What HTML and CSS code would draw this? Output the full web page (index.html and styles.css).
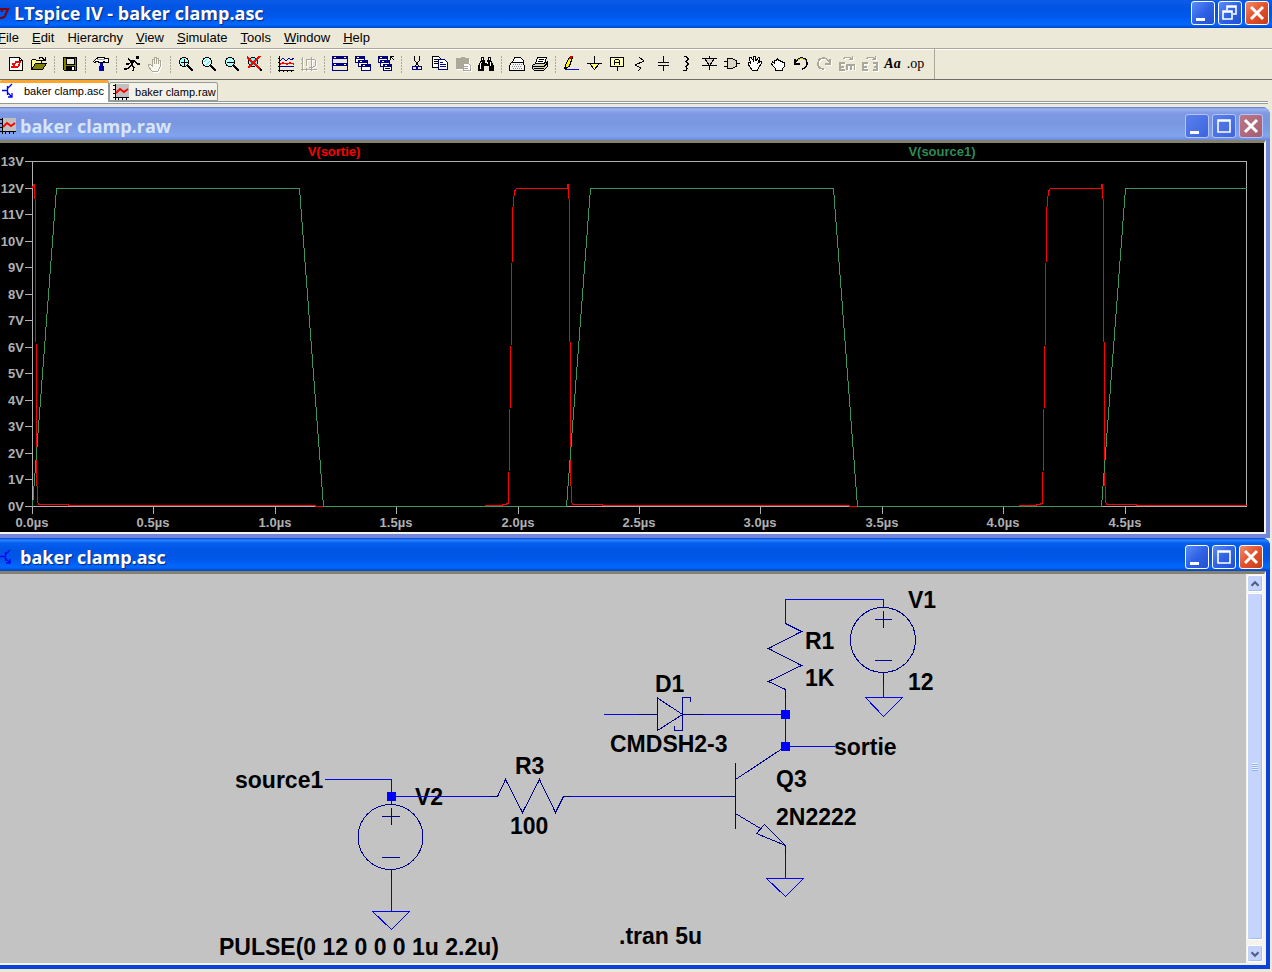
FILE: index.html
```html
<!DOCTYPE html>
<html lang="en">

<head>
    <meta charset="UTF-8" />
    <meta name="viewport" content="width=device-width, initial-scale=1.0" />
    <title>LTspice IV - baker clamp.asc</title>
    <link rel="stylesheet" href="styles.css">
</head>

<body>
    <header class="titlebar">
        <svg class="app-logo" viewBox="0 0 10 16"><path d="M0 4h8l-3 7q-1 2-5 2M0 4q2 0 2 3" fill="none" stroke="#7a0010" stroke-width="2" /></svg>
        <h1>LTspice IV - baker clamp.asc</h1>
        <div class="win-buttons">
            <button aria-label="Minimize"><svg viewBox="0 0 22 22"><path d="M4 16h9v3H4z" fill="#fff" /></svg></button>
            <button aria-label="Restore"><svg viewBox="0 0 22 22"><path d="M8 8V4h9v8h-3M8 5h9M4 9h9v8H4zM4 10h9" fill="none" stroke="#fff" stroke-width="1.6" /></svg></button>
            <button class="close" aria-label="Close"><svg viewBox="0 0 22 22"><path d="M5 5l12 12M17 5L5 17" stroke="#fff" stroke-width="3" /></svg></button>
        </div>
    </header>

    <nav class="menubar">
        <button><u>F</u>ile</button>
        <button><u>E</u>dit</button>
        <button>H<u>i</u>erarchy</button>
        <button><u>V</u>iew</button>
        <button><u>S</u>imulate</button>
        <button><u>T</u>ools</button>
        <button><u>W</u>indow</button>
        <button><u>H</u>elp</button>
    </nav>

    <div class="toolbar">
        <!-- file -->
        <button aria-label="New schematic"><svg viewBox="0 0 16 16"><path d="M1.5 1.5h10l3 3v10h-13z" fill="#fff" stroke="#000" /><path d="M11.5 1.5v3h3" fill="none" stroke="#000" /><path d="M3 11h2l3-5h5M6 11h3q2 0 3-5M4 8h2" fill="none" stroke="#f00" stroke-width="1.6" /></svg></button>
        <button aria-label="Open"><svg viewBox="0 0 16 16"><path d="M.5 13.5v-9l1-1h3l1 1h5v3" fill="#ffff90" stroke="#000" /><path d="M.5 13.5l4-6h11l-4 6z" fill="#808000" stroke="#000" /><path d="M8 2.500l1-1h2l3 3M14.5 1v4M11 4.5h4" fill="none" stroke="#000" /></svg></button>
        <span class="sep"></span>
        <button aria-label="Save"><svg viewBox="0 0 16 16"><path d="M1.5 1.5h13v13h-12l-1-1z" fill="#808000" stroke="#000" /><path d="M4 2h8v6H4z" fill="#ece9d8" stroke="#000" /><path d="M4 10h9v4H4z" fill="#000" /><path d="M10 11h2v3h-2z" fill="#fff" /></svg></button>
        <span class="sep"></span>
        <button aria-label="Control panel"><svg viewBox="0 0 16 16"><path d="M.5 5.5l3-3 2-1h5l2 1h3v4h-3l-2-1v1h-5v-1h-2l-2 1z" fill="#fff" stroke="#000" /><path d="M4 3.5h8" stroke="#a0a0a0" /><path d="M7 7h3v3h1v5H6v-5h1z" fill="#0000e0" /><path d="M9.5 7v8" stroke="#000080" /></svg></button>
        <span class="sep"></span>
        <button aria-label="Run"><svg viewBox="0 0 16 16"><path d="M12 0h3v3h-3z" fill="#000" /><path d="M11 4L7 9l3 2-1 4M7 9l-2 3-3 1H0M4 2l2 3h5l2 3h3M9 4L5 8H2M7 6l2 3" fill="none" stroke="#000" stroke-width="1.3" /></svg></button>
        <button aria-label="Halt" disabled><svg viewBox="0 0 16 16"><path d="M5 15l-4-5v-2h2l2 2V3h2V1h2v1h2v2h2v7l-2 4zM7 3v5M9 2v6M11 4v4" fill="#f8f7f0" stroke="#aca899" /></svg></button>
        <span class="sep"></span>
        <!-- zoom -->
        <button aria-label="Zoom in"><svg viewBox="0 0 16 16"><circle cx="6" cy="6" r="4.5" fill="#b0ffff" stroke="#000" /><path d="M10 10l5 5" stroke="#000" stroke-width="2" /><path d="M6.5 3v7M3 6.500h7" stroke="#000" /></svg></button>
        <button aria-label="Pan"><svg viewBox="0 0 16 16"><circle cx="6" cy="6" r="4.5" fill="#d9ffff" stroke="#000" /><path d="M3 6l3-3M5 9l4-4" stroke="#3ee" /><path d="M10 10l5 5" stroke="#000" stroke-width="2" /></svg></button>
        <button aria-label="Zoom out"><svg viewBox="0 0 16 16"><circle cx="6" cy="6" r="4.5" fill="#b0ffff" stroke="#000" /><path d="M10 10l5 5" stroke="#000" stroke-width="2" /><path d="M3 6.5h7" stroke="#000" /></svg></button>
        <button aria-label="Zoom to fit"><svg viewBox="0 0 16 16"><circle cx="6" cy="6" r="4.5" fill="#6ff" stroke="#000" /><path d="M10 10l5 5" stroke="#000" stroke-width="2" /><path d="M0 1l13 12M13 0L1 12" stroke="#f00" stroke-width="2" /></svg></button>
        <span class="sep"></span>
        <button aria-label="Autorange"><svg viewBox="0 0 16 16"><path d="M1.5 0v16M0 14.5h16M0 2.5h2M0 6.5h2M0 10.5h2M5.5 14v2M9.5 14v2M13.5 14v2" stroke="#000" /><path d="M2 5l3-3 3 3 3-3 2 2 3-2M2 11l3-1 4 1 3-1 4 1" fill="none" stroke="#0000a0" /><path d="M2 8l3-1 4 1 3-1 4 1" fill="none" stroke="#f00" stroke-width="1.5" /></svg></button>
        <button aria-label="Pick visible traces" disabled><svg viewBox="0 0 16 16"><path d="M1.5 1v14M0 13.5h16M0 3.5h2M0 7.5h2M5.5 12v3M10.5 12v3M6 3h6q3 0 3 4t-3 4H8M6 3q-2 3 0 7M10 1v12" fill="none" stroke="#aca899" /></svg></button>
        <span class="sep"></span>
        <!-- windows -->
        <button aria-label="Tile windows"><svg viewBox="0 0 16 16"><path d="M.5.5h15v14H.5z" fill="#ece9d8" stroke="#000080" /><path d="M0 0h16v3H0zM0 7h16v3H0z" fill="#000080" /><path d="M2 1.5h2M12 1.5h2M2 8.5h2M12 8.5h2" stroke="#fff" /></svg></button>
        <button aria-label="Cascade windows"><svg viewBox="0 0 16 16"><g fill="#fff" stroke="#000080"><path d="M.5.5h9v6h-9z" /><path d="M3.5 4.5h9v6h-9z" /><path d="M6.5 8.500h9v6h-9z" /></g><path d="M0 0h10v3H0zM3 4h10v3H3zM6 8h10v3H6z" fill="#000080" /><path d="M2 1.5h2M5 5.5h2M8 9.5h2" stroke="#fff" /></svg></button>
        <button aria-label="Close all windows"><svg viewBox="0 0 16 16"><g fill="#fff" stroke="#000080"><path d="M.5.5h9v6h-9z" /><path d="M2.5 4.5h9v6h-9z" /><path d="M5.5 8.5h8v6h-8z" /></g><path d="M0 0h10v3H0zM2 4h10v3H2zM5 8h9v3H5z" fill="#000080" /><path d="M2 1.5h2M4 5.5h2M7 9.5h2" stroke="#fff" /><path d="M7 12.5h5" stroke="#000" /><path d="M12.5 4V.5H16M12.5.5l4 4" stroke="#000" fill="none" /></svg></button>
        <span class="sep"></span>
        <!-- clipboard -->
        <button aria-label="Cut"><svg viewBox="0 0 16 16"><path d="M5.5 0v4l4 6M10.5 0v4l-4 6" fill="none" stroke="#000" /><circle cx="5.5" cy="12" r="2" fill="none" stroke="#000080" /><circle cx="10.500" cy="12" r="2" fill="none" stroke="#000080" /></svg></button>
        <button aria-label="Copy"><svg viewBox="0 0 16 16"><path d="M.5.5h6l3 3v8h-9z" fill="#fff" stroke="#000" /><path d="M2 3.5h4M2 5.5h5M2 7.5h4" stroke="#000" /><path d="M6.5 3.5h6l3 3v7h-9z" fill="#fff" stroke="#000080" /><path d="M8 6.5h3M8 8.5h6M8 10.5h6" stroke="#000080" /></svg></button>
        <button aria-label="Paste" disabled><svg viewBox="0 0 16 16"><path d="M1 2h4l1-1h3l1 1h4v5H9v6H1z" fill="#aca899" /><path d="M8.5 7.5h5l2 2v5h-7z" fill="#fff" stroke="#aca899" /><path d="M9 10.5h4M9 12.5h4" stroke="#aca899" /></svg></button>
        <button aria-label="Find"><svg viewBox="0 0 16 16"><path d="M3 1h3v3h1v3h2V4h1V1h3v3l3 6v5h-5v-5H6v5H0v-5l3-6z" fill="#000" /><path d="M4.5 2v2M11.5 2v2M3.5 6L2 10v3M9.5 6v2M12.5 6v4" stroke="#fff" fill="none" /></svg></button>
        <span class="sep"></span>
        <button aria-label="Print preview"><svg viewBox="0 0 16 16"><path d="M3.5 6.5l2-5h6l3 3v2" fill="#fff" stroke="#000" /><path d="M2.5 6.5h11l2 3v5H.5v-5z" fill="#f4f4f4" stroke="#000" /><path d="M4 8.5h10M3 10.5h10M4 12.5h9" stroke="#888" stroke-dasharray="1 1" /></svg></button>
        <button aria-label="Print"><svg viewBox="0 0 16 16"><path d="M3.5 7.5l2-6h9l-2 6z" fill="#fff" stroke="#000" /><path d="M7 3.5h5M6 5.5h5" stroke="#000" /><path d="M.5 9.5l3-2h9l3-2v5l-4 4h-9l-2-2z" fill="#d8d5c5" stroke="#000" /><path d="M1 10.5h11l3-3M2 12.5h10" stroke="#000" fill="none" /><path d="M9 11.5h2" stroke="#dd0" /></svg></button>
        <span class="sep"></span>
        <!-- schematic parts -->
        <button aria-label="Wire"><svg viewBox="0 0 16 16"><path d="M2.5 9l4-8h3l-3 9-4 3z" fill="#ff0" stroke="#000" /><path d="M7 0h3L9 3H6z" fill="#d00000" /><path d="M1 13l1-3 2 2z" fill="#000" /><path d="M2 13.5h14" stroke="#00f" /></svg></button>
        <button aria-label="Ground"><svg viewBox="0 0 16 16"><path d="M8.5 0v7M1 7.5h15" stroke="#000" /><path d="M3.500 7.5h10l-5 6z" fill="#ffff80" stroke="#000" /></svg></button>
        <button aria-label="Label net"><svg viewBox="0 0 16 16"><path d="M1.5 1.5h13v9h-13z" fill="#ffffb0" stroke="#000" /><path d="M5.500 9V5l1-1.500h3l1 1.500v4M6 6.500h4M8.500 11v4" fill="none" stroke="#000" /></svg></button>
        <button aria-label="Resistor"><svg viewBox="0 0 16 16"><path d="M7 1l5 4-9 4 6 3-3 3" fill="none" stroke="#000" /></svg></button>
        <button aria-label="Capacitor"><svg viewBox="0 0 16 16"><path d="M8.500 0v6M8.500 10v5M3 6.5h11M3 9.5h11" stroke="#000" /></svg></button>
        <button aria-label="Inductor"><svg viewBox="0 0 16 16"><path d="M6 .5h2l2 2v1l-2 2H7h1l2 2v1l-2 2H7h1l1 2-1 2H5" fill="none" stroke="#000" /></svg></button>
        <button aria-label="Diode"><svg viewBox="0 0 16 16"><path d="M3.5 2.5h10l-5 7z" fill="#d8d5c5" stroke="#000" /><path d="M8.5 0v2M8.5 10v4M1 2.5h15M1 9.5h15" stroke="#000" /></svg></button>
        <button aria-label="Component"><svg viewBox="0 0 16 16"><path d="M3.5 2.5H8l4 2 1 3-1 3-4 2H3.500z" fill="#d8d5c5" stroke="#000" /><path d="M0 5.500h3M0 10.500h3M13 7.500h3" stroke="#000" /></svg></button>
        <button aria-label="Move"><svg viewBox="0 0 16 16"><path d="M5 14L1 8V6h2l1 2-2-6 2-1 3 5-1-6h2l1 5 3-4 1 1-2 5 3-2 1 1-5 9z" fill="#fff" stroke="#000" /></svg></button>
        <button aria-label="Drag"><svg viewBox="0 0 16 16"><path d="M5 14v-2L1.500 8l1-2 2 1V4h2l1-1 1 1h2v1h2v1h2v4l-2 3v1z" fill="#fff" stroke="#000" /></svg></button>
        <button aria-label="Undo"><svg viewBox="0 0 16 16"><path d="M2 3v5h5M2 8q2-6 7-6t5 6q0 4-5 5" fill="none" stroke="#000" stroke-width="1.5" /><path d="M5 4q5-3 8 1" fill="none" stroke="#cc0" /></svg></button>
        <button aria-label="Redo" disabled><svg viewBox="0 0 16 16"><path d="M14 3v5H9M14 8q-2-6-7-6T2 8q0 5 6 5" fill="none" stroke="#aca899" stroke-width="1.5" /></svg></button>
        <button aria-label="Rotate" disabled><svg viewBox="0 0 16 16"><path d="M4 3q4-4 9 0V0M13 3h-3" fill="none" stroke="#aca899" /><path d="M6 7H1v7h5M1 10.500h4M8 14V9h8v5M12 9v5" fill="none" stroke="#aca899" stroke-width="2" /></svg></button>
        <button aria-label="Mirror" disabled><svg viewBox="0 0 16 16"><path d="M4 3q4-4 9 0V0M13 3h-3" fill="none" stroke="#aca899" /><path d="M6 7H1v7h5M1 10.500h4M11 7h4v7h-4M15 10.500h-3" fill="none" stroke="#aca899" stroke-width="2" /></svg></button>
        <button class="glyph glyph-text">Aa</button>
        <button class="glyph">.op</button>
        <span class="toolbar-end"></span>
    </div>

    <div class="tabs">
        <button class="tab active"><svg viewBox="0 0 16 16"><path d="M5.5 3v9M0 7.500h5M5 6l5-5M5 9l5 5M10 10v4H6" fill="none" stroke="#00f" stroke-width="1.3" /></svg>baker clamp.asc</button>
        <button class="tab"><svg viewBox="0 0 16 16"><path d="M3 0h13v13H3z" fill="#c0c0c0" /><path d="M2.5 0v16M0 13.5h16M0 1.5h2M0 5.5h2M0 9.5h2M5.5 14v2M9.5 14v2M13.5 14v2" stroke="#000" /><path d="M3 9l4-4 4 3 4-3" fill="none" stroke="#f00" stroke-width="1.8" /></svg>baker clamp.raw</button>
    </div>

    <main class="workspace">
        <section class="window inactive">
            <div class="window-title">
                <svg viewBox="0 0 16 16"><path d="M3 0h13v13H3z" fill="#c0c0c0" /><path d="M2.5 0v16M0 13.5h16M0 1.5h2M0 5.5h2M0 9.5h2M5.5 14v2M9.5 14v2M13.5 14v2" stroke="#000" /><path d="M3 9l4-4 4 3 4-3" fill="none" stroke="#f00" stroke-width="1.8" /></svg>
                <h2>baker clamp.raw</h2>
                <div class="win-buttons">
                    <button aria-label="Minimize"><svg viewBox="0 0 22 22"><path d="M4 16h9v3H4z" fill="#fff" /></svg></button>
                    <button aria-label="Maximize"><svg viewBox="0 0 22 22"><path d="M5 5h12v12H5zM5 6h12" fill="none" stroke="#fff" stroke-width="1.6" /></svg></button>
                    <button class="close" aria-label="Close"><svg viewBox="0 0 22 22"><path d="M5 5l12 12M17 5L5 17" stroke="#fff" stroke-width="3" /></svg></button>
                </div>
            </div>
            <div class="window-body">
                <svg class="plot" viewBox="0 0 1264 389">
                    <!-- frame and ticks -->
                    <g class="axis">
                        <path d="M32.5 18.5H1246.5V363.5H32.5z" />
                        <path d="M25 18.5h7M25 45.5h7M25 71.5h7M25 98.5h7M25 124.5h7M25 151.5h7M25 177.5h7M25 204.5h7M25 230.5h7M25 257.5h7M25 283.5h7M25 310.5h7M25 336.5h7M25 363.5h7" />
                        <path d="M32.5 364v7M153.5 364v7M275.5 364v7M396.5 364v7M518.5 364v7M639.5 364v7M760.5 364v7M882.5 364v7M1003.5 364v7M1125.5 364v7" />
                    </g>
                    <g class="labels-y">
                        <text x="24" y="23">13V</text>
                        <text x="24" y="50">12V</text>
                        <text x="24" y="76">11V</text>
                        <text x="24" y="103">10V</text>
                        <text x="24" y="129">9V</text>
                        <text x="24" y="156">8V</text>
                        <text x="24" y="182">7V</text>
                        <text x="24" y="209">6V</text>
                        <text x="24" y="235">5V</text>
                        <text x="24" y="262">4V</text>
                        <text x="24" y="288">3V</text>
                        <text x="24" y="315">2V</text>
                        <text x="24" y="341">1V</text>
                        <text x="24" y="368">0V</text>
                    </g>
                    <g class="labels-x">
                        <text x="32" y="384">0.0µs</text>
                        <text x="153" y="384">0.5µs</text>
                        <text x="275" y="384">1.0µs</text>
                        <text x="396" y="384">1.5µs</text>
                        <text x="518" y="384">2.0µs</text>
                        <text x="639" y="384">2.5µs</text>
                        <text x="760" y="384">3.0µs</text>
                        <text x="882" y="384">3.5µs</text>
                        <text x="1003" y="384">4.0µs</text>
                        <text x="1125" y="384">4.5µs</text>
                    </g>
                    <text class="name-sortie" x="334" y="13">V(sortie)</text>
                    <text class="name-source" x="942" y="13">V(source1)</text>
                    <!-- traces -->
                    <path class="trace-sortie" d="M32.5 45.5L33.5 41.5H34.5L35.5 70 36.5 327 37.5 358 38.5 361.5H68.5V362.5H315.5V363.5H485.5V362.5H500.5L508.5 360.5 511.5 172 512.5 70 514.5 48 516.5 45.5H567.5V41.5H568.5L569.5 70 570.5 327 571.5 358 572.5 361.5H602.5V362.5H849.5V363.5H1019.5V362.5H1034.5L1042.5 360.5 1045.5 172 1046.5 70 1048.5 48 1050.5 45.5H1101.5V41.5H1102.5L1103.5 70 1104.5 327 1105.5 358 1106.5 361.5H1136.5V362.5H1246.5" />
                    <path class="trace-source" d="M32.5 363.5L56.5 45.5H299.5L323.5 363.5H566.5L590.5 45.5H833.5L857.5 363.5H1101.5L1125.5 45.5H1246.5" />
                </svg>
            </div>
        </section>

        <section class="window">
            <div class="window-title">
                <svg viewBox="0 0 16 16"><path d="M5.5 3v9M0 7.500h5M5 6l5-5M5 9l5 5M10 10v4H6" fill="none" stroke="#00f" stroke-width="1.3" /></svg>
                <h2>baker clamp.asc</h2>
                <div class="win-buttons">
                    <button aria-label="Minimize"><svg viewBox="0 0 22 22"><path d="M4 16h9v3H4z" fill="#fff" /></svg></button>
                    <button aria-label="Maximize"><svg viewBox="0 0 22 22"><path d="M5 5h12v12H5zM5 6h12" fill="none" stroke="#fff" stroke-width="1.6" /></svg></button>
                    <button class="close" aria-label="Close"><svg viewBox="0 0 22 22"><path d="M5 5l12 12M17 5L5 17" stroke="#fff" stroke-width="3" /></svg></button>
                </div>
            </div>
            <div class="window-body">
                <svg class="schematic" viewBox="0 0 1246 389">
                    <g class="net-text">
                        <text x="908" y="34">V1</text>
                        <text x="908" y="116">12</text>
                        <text x="805" y="75">R1</text>
                        <text x="805" y="112">1K</text>
                        <text x="655" y="118">D1</text>
                        <text x="610" y="178">CMDSH2-3</text>
                        <text x="834" y="181">sortie</text>
                        <text x="776" y="213">Q3</text>
                        <text x="776" y="251">2N2222</text>
                        <text x="235" y="214">source1</text>
                        <text x="415" y="231">V2</text>
                        <text x="515" y="200">R3</text>
                        <text x="510" y="260">100</text>
                        <text x="219" y="381">PULSE(0 12 0 0 0 1u 2.2u)</text>
                        <text x="619" y="370">.tran 5u</text>
                    </g>
                    <g class="wire">
                        <path d="M785.5 49.5V25.5H883.5V33.5M883.5 110V123.5M785.5 115.5V172.5H835" />
                        <path d="M604 140.5H638M703 140.5H785M325 205.5H391.5V231M391.5 222.5H490M572 222.5H720" />
                        <path d="M785.5 280V304.5M391.5 305V337.5" />
                        <path d="M865.5 123.5H902.5L883.5 142.5zM766.5 304.5H803.5L785.5 322.5zM372.5 337.5H409.5L391.5 355.5z" />
                    </g>
                    <g class="part">
                        <!-- R1, R3 -->
                        <path d="M785.5 49.5L801.5 57.5 768.5 74.5 801.5 91.5 768.5 107.5 785.5 115.5V124" />
                        <path d="M490 222.5H497.5L505.5 205.5 522.5 238.5 539.5 205.5 555.5 238.5 563.5 222.5H572" />
                        <!-- D1 -->
                        <path d="M638 140.5H657.5M682.5 140.5H703M657.5 124V156.5L682.5 140.5zM690.5 127.5V123.5H682.5V156.5H674.5V152" />
                        <!-- Q3 -->
                        <path d="M720 222.5H735.5M735.5 189V254.5M785.5 172.5L735.5 205.5M735.5 239.5L760.5 254.5M764.5 250.5L785.5 271.5 756.5 259.5zM785.5 271.5V280" />
                        <!-- V1, V2 -->
                        <circle cx="883" cy="66" r="32.5" />
                        <path d="M875 45.5H892M883.5 37V54M875 86.5H892M883.5 98V110" />
                        <circle cx="390.5" cy="263" r="32.5" />
                        <path d="M382 242.5H400M391.5 234V251M382 283.5H400M391.5 295V305" />
                    </g>
                    <g class="node">
                        <rect x="781" y="136" width="9" height="9" />
                        <rect x="781" y="168" width="9" height="9" />
                        <rect x="387" y="218" width="9" height="9" />
                    </g>
                </svg>
                <div class="scrollbar">
                    <button aria-label="Scroll up"><svg viewBox="0 0 16 16"><path d="M4 10l4-4 4 4" /></svg></button>
                    <div class="thumb"><i></i></div>
                    <button aria-label="Scroll down"><svg viewBox="0 0 16 16"><path d="M4 6l4 4 4-4" /></svg></button>
                </div>
            </div>
        </section>
    </main>
</body>

</html>
```
FILE: styles.css
```css
* {
    box-sizing: border-box;
}

body {
    margin: 0;
    min-height: 100vh;
    background: #ece9d8;
    font-family: "Liberation Sans", Arial, sans-serif;
    font-size: 13px;
    color: #000;
    overflow-x: hidden;
}

button {
    margin: 0;
    padding: 0;
    border: 0;
    background: none;
    font: inherit;
    color: inherit;
}

svg {
    display: block;
}

h1,
h2 {
    margin: 0;
    flex: 1;
    font-family: "Open Sans", "Trebuchet MS", sans-serif;
    font-size: 18px;
    line-height: 24px;
    font-weight: bold;
    color: #fff;
    text-shadow: 1px 1px 1px #0a2a7a;
}

/* title bars */
.titlebar {
    display: flex;
    align-items: center;
    height: 28px;
    padding: 0 3px 2px 0;
    background: linear-gradient(#0a5be8, #0054e3 30%, #0058ee 60%, #0068ff 88%, #0045c8);
}

.app-logo {
    width: 10px;
    height: 16px;
    margin-right: 4px;
}

.win-buttons {
    display: flex;
    gap: 3px;
}

.win-buttons button {
    width: 24px;
    height: 24px;
    border: 1px solid #fff;
    border-radius: 3px;
    background: linear-gradient(135deg, #5c8cf5, #2f62e6 50%, #2350d0);
}

.win-buttons .close {
    background: linear-gradient(135deg, #f08a68, #e2502a 50%, #c83c14);
}

.win-buttons svg {
    width: 22px;
    height: 22px;
}

/* menu */
.menubar {
    display: flex;
    gap: 13px;
    height: 20px;
    margin-left: -2px;
    line-height: 20px;
}

/* toolbar */
.toolbar {
    display: flex;
    align-items: stretch;
    height: 32px;
    padding-left: 4px;
    border-top: 1px solid #aca899;
    border-bottom: 1px solid #716f64;
    box-shadow: inset 0 1px #fff;
}

.toolbar button {
    display: flex;
    flex: none;
    align-items: center;
    justify-content: center;
    width: 23px;
}

.toolbar svg {
    width: 16px;
    height: 16px;
    shape-rendering: crispEdges;
}

.toolbar button:disabled svg {
    filter: drop-shadow(1px 1px 0 #fff);
}

.toolbar .glyph {
    font-family: "Liberation Serif", serif;
    font-size: 14px;
}

.toolbar .glyph-text {
    font-style: italic;
    font-weight: bold;
}

.sep {
    flex: none;
    width: 8px;
    margin: 7px 0 6px;
    background: repeating-linear-gradient(#aca899 0 2px, transparent 2px 3px) 4px 0 / 1px 100% no-repeat;
}

.toolbar-end {
    width: 8px;
    border-right: 1px solid #aca899;
}

/* document tabs */
.tabs {
    display: flex;
    align-items: flex-start;
    height: 27px;
    background: linear-gradient(#919b9c, #919b9c) 0 21px / 1268px 1px no-repeat,
        linear-gradient(#fff, #fff) 0 22px / 1268px 1px no-repeat,
        linear-gradient(#919b9c, #919b9c) 0 23px / 1268px 1px no-repeat;
}

.tab {
    display: flex;
    align-items: center;
    gap: 6px;
    height: 19px;
    margin-top: 2px;
    padding: 0 1px 0 3px;
    border: 1px solid #919b9c;
    border-radius: 2px 2px 0 0;
    background: #f3f1e8;
    font-size: 11px;
}

.tab svg {
    width: 16px;
    height: 16px;
}

.tab.active {
    height: 22px;
    margin-top: 0;
    padding: 0 4px 3px 2px;
    border: 0;
    border-top: 3px solid #ffa52c;
    border-right: 1px solid #919b9c;
    background: #fff;
}

/* child windows */
.workspace {
    padding-right: 2px;
}

.window {
    border: solid #0a43dc;
    border-width: 0 4px 4px 0;
    border-radius: 0 8px 0 0;
    background: #0a43dc;
}

.window-title {
    display: flex;
    align-items: center;
    height: 33px;
    margin-right: -4px;
    padding: 4px 7px 0 0;
    border-radius: 0 8px 0 0;
    background: linear-gradient(#0040c8, #2a86ff 2px, #0560f0 5px, #0054e3 12px, #0058ea 22px, #006aff 29px, #0045c8);
}

.window-title > svg {
    width: 16px;
    height: 16px;
    margin-right: 4px;
}

.window-body {
    display: flex;
    border-top: 3px solid #85816f;
    border-right: 2px solid #f4f2e8;
    border-bottom: 2px solid #f4f2e8;
    background: #c3c3c3;
}

.inactive {
    background: #7286dc;
    border-color: #7286dc;
}

.inactive .window-title {
    background: linear-gradient(#5a78d8, #9ab4f0 2px, #8099e4 6px, #7a96e0 16px, #80a4ec 29px, #6a86dc);
}

.inactive h2 {
    color: #d8e4f8;
    text-shadow: none;
}

.inactive .win-buttons button {
    border-color: #b4c6f6;
    background: linear-gradient(135deg, #5a80ea, #3c64e0);
}

.inactive .win-buttons .close {
    background: linear-gradient(135deg, #b87888, #a85c70);
}

/* waveform viewer */
.plot {
    flex: 1;
    min-width: 0;
    background: #000;
    font-size: 13px;
    font-weight: bold;
}

.plot path {
    fill: none;
    shape-rendering: crispEdges;
}

.axis path {
    stroke: #b0b0b0;
}

.labels-y text {
    fill: #b0b0b0;
    text-anchor: end;
}

.labels-x text {
    fill: #b0b0b0;
    text-anchor: middle;
}

.name-sortie {
    fill: #f00;
    text-anchor: middle;
}

.name-source {
    fill: #2e8b57;
    text-anchor: middle;
}

.trace-sortie {
    stroke: #f00;
}

.trace-source {
    stroke: #3c9660;
}

/* schematic */
.schematic {
    flex: 1;
    min-width: 0;
    font-size: 23px;
    font-weight: bold;
}

.wire path,
.part path,
.part circle {
    fill: none;
    shape-rendering: crispEdges;
}

.wire path {
    stroke: #00f;
}

.part path,
.part circle {
    stroke: #000090;
}

.node rect {
    fill: #00f;
}

.scrollbar {
    display: flex;
    flex-direction: column;
    flex: none;
    gap: 1px;
    width: 18px;
    padding: 1px;
    background: #f4f3ee;
}

.scrollbar button,
.thumb {
    border: 1px solid #fff;
    border-radius: 2px;
    background: #c4d4fc;
    box-shadow: inset -1px -1px #a8bff0;
}

.scrollbar button {
    flex: none;
    width: 16px;
    height: 17px;
}

.scrollbar button svg {
    width: 14px;
    height: 14px;
}

.scrollbar path {
    fill: none;
    stroke: #4d6185;
    stroke-width: 2.5;
}

.thumb {
    display: flex;
    flex: 1;
    align-items: center;
    justify-content: center;
    margin-bottom: 4px;
}

.thumb i {
    width: 6px;
    height: 8px;
    background: repeating-linear-gradient(#eef4fe 0 1px, #8cb0f8 1px 2px);
}
```
